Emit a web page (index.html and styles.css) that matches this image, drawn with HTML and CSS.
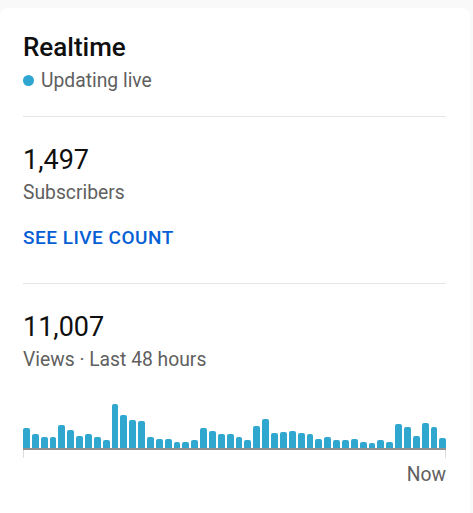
FILE: index.html
```html
<!DOCTYPE html>
<html>
<head>
<meta charset="utf-8">
<link rel="stylesheet" href="styles.css">
</head>
<body>
<div class="card">
  <section class="head">
    <h2 class="title">Realtime</h2>
    <div class="live"><span class="dot"></span>Updating live</div>
  </section>
  <hr class="divider">
  <section class="stat">
    <div class="num">1,497</div>
    <div class="label">Subscribers</div>
    <a class="link">SEE LIVE COUNT</a>
  </section>
  <hr class="divider">
  <section class="stat views">
    <div class="num">11,007</div>
    <div class="label">Views · Last 48 hours</div>
    <div class="chart">
      <div class="bar" style="height:20px"></div>
      <div class="bar" style="height:14px"></div>
      <div class="bar" style="height:11px"></div>
      <div class="bar" style="height:11px"></div>
      <div class="bar" style="height:23px"></div>
      <div class="bar" style="height:18px"></div>
      <div class="bar" style="height:12px"></div>
      <div class="bar" style="height:14px"></div>
      <div class="bar" style="height:11px"></div>
      <div class="bar" style="height:8px"></div>
      <div class="bar" style="height:44px"></div>
      <div class="bar" style="height:33px"></div>
      <div class="bar" style="height:28px"></div>
      <div class="bar" style="height:27px"></div>
      <div class="bar" style="height:11px"></div>
      <div class="bar" style="height:9px"></div>
      <div class="bar" style="height:9px"></div>
      <div class="bar" style="height:6px"></div>
      <div class="bar" style="height:6px"></div>
      <div class="bar" style="height:8px"></div>
      <div class="bar" style="height:20px"></div>
      <div class="bar" style="height:17px"></div>
      <div class="bar" style="height:14px"></div>
      <div class="bar" style="height:14px"></div>
      <div class="bar" style="height:11px"></div>
      <div class="bar" style="height:8px"></div>
      <div class="bar" style="height:22px"></div>
      <div class="bar" style="height:29px"></div>
      <div class="bar" style="height:15px"></div>
      <div class="bar" style="height:16px"></div>
      <div class="bar" style="height:17px"></div>
      <div class="bar" style="height:15px"></div>
      <div class="bar" style="height:14px"></div>
      <div class="bar" style="height:9px"></div>
      <div class="bar" style="height:11px"></div>
      <div class="bar" style="height:8px"></div>
      <div class="bar" style="height:8px"></div>
      <div class="bar" style="height:9px"></div>
      <div class="bar" style="height:6px"></div>
      <div class="bar" style="height:5px"></div>
      <div class="bar" style="height:8px"></div>
      <div class="bar" style="height:6px"></div>
      <div class="bar" style="height:24px"></div>
      <div class="bar" style="height:21px"></div>
      <div class="bar" style="height:12px"></div>
      <div class="bar" style="height:25px"></div>
      <div class="bar" style="height:21px"></div>
      <div class="bar" style="height:10px"></div>
    </div>
    <div class="ticks"></div>
    <div class="now">Now</div>
  </section>
</div>
</body>
</html>
```

FILE: styles.css
```css
html, body {
  margin: 0;
  padding: 0;
  background: #f9f9f9;
}
body {
  font-family: Roboto, "Liberation Sans", sans-serif;
  color: #0f0f0f;
}
.card {
  margin-top: 8px;
  width: 470px;
  box-sizing: border-box;
  background: #ffffff;
  border-radius: 8px;
  padding: 23px 24px 40px 23px;
}
.title {
  margin: 0;
  font-size: 26px;
  line-height: 32px;
  font-weight: 500;
  color: #0f0f0f;
}
.live {
  margin-top: 6px;
  display: flex;
  align-items: center;
  font-size: 19.3px;
  line-height: 24px;
  color: #606060;
}
.dot {
  width: 11px;
  height: 11px;
  border-radius: 50%;
  background: #2ea6d0;
  margin-right: 7px;
  margin-top: -1px;
}
.divider {
  margin: 23px 0 0 0;
  border: 0;
  height: 1px;
  background: #e5e5e5;
}
.stat {
  padding-top: 27px;
}
.num {
  font-size: 27px;
  line-height: 32px;
  font-weight: 400;
  color: #0f0f0f;
}
.label {
  margin-top: 5px;
  font-size: 19.3px;
  line-height: 24px;
  color: #606060;
}
.link {
  display: block;
  margin-top: 21px;
  margin-bottom: 33px;
  font-size: 19px;
  line-height: 24px;
  font-weight: 500;
  letter-spacing: 0.5px;
  color: #065fd4;
  text-transform: uppercase;
}
.chart {
  margin-top: 28px;
  height: 48px;
  display: flex;
  align-items: flex-end;
  gap: 2px;
  border-bottom: 2px solid #909090;
}
.bar {
  flex: 1;
  background: #30a7cf;
  border-radius: 2px 2px 0 0;
}
.ticks {
  height: 8px;
  border-left: 1px solid #dcdcdc;
  border-right: 1px solid #dcdcdc;
}
.now {
  margin-top: 5px;
  text-align: right;
  font-size: 19.3px;
  line-height: 24px;
  color: #606060;
}
```
